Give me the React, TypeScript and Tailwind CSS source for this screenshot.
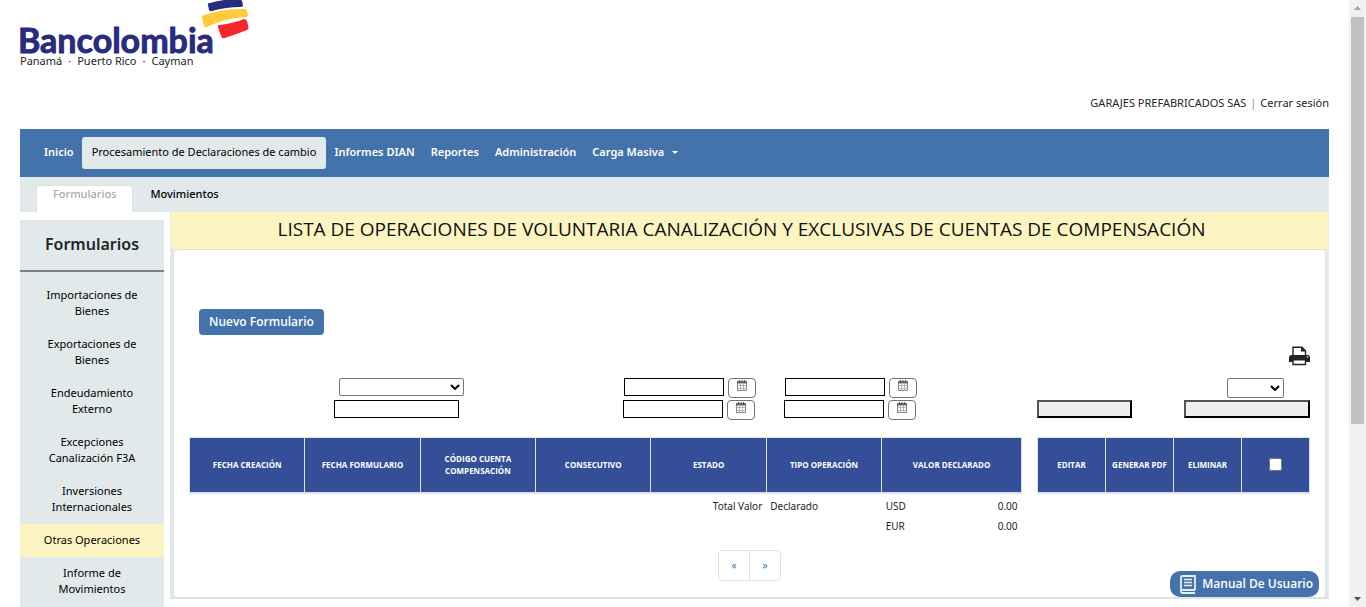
import type { ReactNode } from 'react';

const menu = ['Informes DIAN', 'Reportes', 'Administración'];

const forms = [
  'Importaciones de Bienes',
  'Exportaciones de Bienes',
  'Endeudamiento Externo',
  'Excepciones Canalización F3A',
  'Inversiones Internacionales',
  'Otras Operaciones',
  'Informe de Movimientos',
];

const columns = [
  'FECHA CREACIÓN',
  'FECHA FORMULARIO',
  'CÓDIGO CUENTA COMPENSACIÓN',
  'CONSECUTIVO',
  'ESTADO',
  'TIPO OPERACIÓN',
  'VALOR DECLARADO',
];

function Logo() {
  return (
    <svg width="232" height="56" viewBox="0 0 232 56" role="img" aria-label="Bancolombia" className="block overflow-visible">
      <text x="-2" y="53" fill="#292b7c" stroke="#292b7c" strokeWidth="0.9" className="font-['Lato',sans-serif] text-[34px] font-bold">
        Bancolombia
      </text>
      <path d="M188 5Q187 3 190 3Q204 -1 219 -1Q221 -1 222 1L223 5Q223 7 220 7Q206 7 192 11Q190 12 189 10Z" fill="#292b7c" />
      <path d="M182 18Q181 16 184 15Q204 8 225 9Q227 9 227 11L228 15Q228 17 226 17Q205 18 187 27Q185 28 184 26Z" fill="#ffcb3a" />
      <path d="M198 27Q197 25 200 25Q214 23 224 19Q226 19 227 21L228.500 27Q229 29 227 30Q217 34 205 38Q202 39 201 36Z" fill="#f5272c" />
    </svg>
  );
}

function CalendarIcon() {
  return (
    <svg width="12" height="13" viewBox="0 0 12 13" aria-hidden="true">
      <path d="M1.500 3.500h9v8h-9z" fill="#fff" stroke="#7d8287" />
      <path d="M1 2h10v2.500H1z" fill="#686d72" />
      <path d="M4.500 4v8M7.500 4v8M1 6.500h10M1 9.500h10" stroke="#a3a7ab" strokeWidth="0.8" />
      <path d="M3.500 1v3M6 1v3M8.500 1v3" stroke="#55595d" />
    </svg>
  );
}

function DateField({ label }: { label: string }) {
  return (
    <div className="flex items-start gap-1">
      <input aria-label={label} className="h-[18px] w-[100px] border border-black bg-white px-1" />
      <button type="button" aria-label={`Calendario: ${label}`} className="flex h-5 w-7 items-start justify-center rounded-[4px] border border-[#6c757d]">
        <CalendarIcon />
      </button>
    </div>
  );
}

function Select({ label, className }: { label: string; className: string }) {
  return (
    <div className={`relative ${className}`}>
      <select aria-label={label} className="block h-full w-full appearance-none rounded-[2px] border border-[#767676] bg-white px-1">
        <option></option>
      </select>
      <svg width="10" height="6" viewBox="0 0 10 6" className="pointer-events-none absolute inset-y-0 right-1 my-auto" aria-hidden="true">
        <path d="M1 1l4 4 4-4" fill="none" stroke="#000" strokeWidth="2" />
      </svg>
    </div>
  );
}

function Th({ children }: { children: ReactNode }) {
  return (
    <th className="h-[55px] border border-b-2 border-[#dee2e6] bg-[#344e98] px-0 text-center align-middle font-['Open_Sans',sans-serif] text-[8px] leading-3 font-bold text-white">
      {children}
    </th>
  );
}

function ScrollBar() {
  return (
    <div className="flex w-[17px] shrink-0 flex-col items-center bg-[#f1f1f1]" aria-hidden="true">
      <svg width="17" height="17" viewBox="0 0 17 17">
        <path d="M5 10l3.500-4 3.500 4z" fill="#a3a3a3" />
      </svg>
      <div className="flex w-[13px] flex-1 flex-col">
        <div className="basis-[71%] bg-[#c1c1c1]" />
      </div>
      <svg width="17" height="17" viewBox="0 0 17 17">
        <path d="M5 7l3.500 4 3.500-4z" fill="#505050" />
      </svg>
    </div>
  );
}

export default function App() {
  return (
    <div className="flex h-screen overflow-hidden bg-white font-['Noto_Sans','Open_Sans',sans-serif] text-[11px] leading-4 text-[#212529]">
      <div className="relative min-w-0 flex-1 overflow-hidden px-5">
        <header>
          <Logo />
          <p className="-mt-[3px] flex gap-1.5">
            <span>Panamá</span>
            <span>·</span>
            <span>Puerto Rico</span>
            <span>·</span>
            <span>Cayman</span>
          </p>
          <div className="flex justify-end gap-1 pt-[26px] pb-[18px]">
            <span>GARAJES PREFABRICADOS SAS</span>
            <span className="text-[#8a8fb5]">|</span>
            <a href="#salir">Cerrar sesión</a>
          </div>
        </header>

        <nav className="flex h-12 items-center bg-[#4472aa] px-4 font-semibold text-white">
          <a href="#inicio" className="px-2 pb-0.5">Inicio</a>
          <a href="#proceso" className="rounded-[3px] bg-[#e1e9ea] px-2.5 pt-[7px] pb-[9px] font-normal text-black">
            Procesamiento de Declaraciones de cambio
          </a>
          {menu.map((item) => (
            <a key={item} href="#menu" className="px-2 pb-0.5">{item}</a>
          ))}
          <button type="button" className="flex items-center gap-2 px-2 pb-0.5">
            Carga Masiva
            <svg width="6" height="3" viewBox="0 0 6 3" aria-hidden="true">
              <path d="M0 0h6L3 3z" fill="#fff" />
            </svg>
          </button>
        </nav>

        <nav className="flex h-[35px] items-end bg-[#e1e9ea] px-4">
          <a href="#formularios" className="h-[27px] rounded-t-[4px] border border-b-0 border-[#dee2e6] bg-white px-4 font-medium text-[#a9a9a9]">
            Formularios
          </a>
          <a href="#movimientos" className="h-[27px] px-[17px] pt-px font-medium text-black">Movimientos</a>
        </nav>

        <div className="flex items-start gap-1.5">
          <aside className="mt-2 w-36 shrink-0 bg-[#e1e9ea] pb-4 text-center text-black">
            <h2 className="border-b-2 border-[#808080] pt-3 pb-3.5 text-base leading-6 font-semibold text-[#212529]">Formularios</h2>
            <ul className="pt-[7px]">
              {forms.map((item) => (
                <li key={item} className={item === 'Otras Operaciones' ? 'bg-[#fcf5c2]' : ''}>
                  <a href="#form" className="block px-5 pt-2 pb-[9px]">{item}</a>
                </li>
              ))}
            </ul>
          </aside>

          <main className="min-w-0 flex-1 border-b border-[#dee2e6] bg-[#e1e9ea]">
            <h1 className="mx-px bg-[#fcf5c2] pr-4 pb-0.5 text-center font-['Open_Sans',sans-serif] text-[19px] leading-[35px] text-[#111]">
              LISTA DE OPERACIONES DE VOLUNTARIA CANALIZACIÓN Y EXCLUSIVAS DE CUENTAS DE COMPENSACIÓN
            </h1>
            <section className="mx-[3px] rounded-[4px] border border-[#dee2e6] bg-white px-[15px] pt-[59px] pb-4">
              <button type="button" className="ml-2.5 h-[26px] rounded-[4px] bg-[#4472aa] px-2.5 font-['Open_Sans',sans-serif] text-xs font-semibold text-white">
                Nuevo Formulario
              </button>
              <div className="flex justify-end pt-[11px]">
                <button type="button" aria-label="Imprimir">
                  <svg width="21" height="20" viewBox="0 0 21 20" aria-hidden="true">
                    <path d="M4 11V1.200h9l3.500 3.500V11" fill="#fff" stroke="#212529" strokeWidth="1.400" />
                    <path d="M12 1v4.500h5z" fill="#212529" />
                    <path d="M0 11.500Q0 9 2.500 9h16q2.500 0 2.500 2.500V16H0z" fill="#212529" />
                    <path d="M4 13.700h12.500v4.800H4z" fill="#fff" stroke="#212529" strokeWidth="1.400" />
                    <circle cx="18.500" cy="11" r="0.800" fill="#fff" />
                  </svg>
                </button>
              </div>

              <div className="flex gap-[15px] pt-3">
                <div className="flex flex-[833] flex-col gap-0.5">
                  <div className="grid grid-cols-[150fr_285fr_161fr_237fr]">
                    <Select label="Filtro" className="col-start-2 h-[18px] w-[125px]" />
                    <DateField label="Fecha de creación desde" />
                    <DateField label="Fecha de formulario desde" />
                  </div>
                  <div className="grid grid-cols-[145fr_289fr_161fr_238fr]">
                    <input aria-label="Valor del filtro" className="col-start-2 h-[18px] w-[125px] border border-black px-1" />
                    <DateField label="Fecha de creación hasta" />
                    <DateField label="Fecha de formulario hasta" />
                  </div>
                </div>
                <div className="flex flex-[273] flex-col gap-0.5">
                  <div className="flex justify-end pr-[26px]">
                    <Select label="Cantidad" className="h-5 w-[57px]" />
                  </div>
                  <div className="flex justify-between">
                    <input aria-label="Editar" disabled className="h-[18px] w-[95px] border-2 border-t-[#545454] border-r-black border-b-black border-l-[#545454] bg-[#efefef]" />
                    <input aria-label="Eliminar" disabled className="h-[18px] w-[126px] border-2 border-t-[#545454] border-r-black border-b-black border-l-[#545454] bg-[#efefef]" />
                  </div>
                </div>
              </div>

              <div className="flex items-start gap-[15px] pt-[17px]">
                <div className="min-w-0 flex-[833]">
                  <table className="w-full table-fixed border-collapse">
                    <colgroup>
                      {columns.map((c) => (
                        <col key={c} className={c === 'VALOR DECLARADO' ? 'w-[16.8%]' : ''} />
                      ))}
                    </colgroup>
                    <thead>
                      <tr>
                        {columns.map((c) => (
                          <Th key={c}>
                            <span className="block px-3.5">{c}</span>
                          </Th>
                        ))}
                      </tr>
                    </thead>
                    <tbody className="text-[10px]">
                      <tr className="h-5">
                        <td colSpan={5} className="pt-1 pr-1 text-right">Total Valor</td>
                        <td className="pt-1 pl-1">Declarado</td>
                        <td className="px-1 pt-1">
                          <div className="flex justify-between"><span>USD</span><span>0.00</span></div>
                        </td>
                      </tr>
                      <tr className="h-5">
                        <td colSpan={6}></td>
                        <td className="px-1 pt-1">
                          <div className="flex justify-between"><span>EUR</span><span>0.00</span></div>
                        </td>
                      </tr>
                    </tbody>
                  </table>
                </div>
                <div className="min-w-0 flex-[273]">
                  <table className="w-full table-fixed border-collapse">
                    <thead>
                      <tr>
                        <Th>EDITAR</Th>
                        <Th>GENERAR PDF</Th>
                        <Th>ELIMINAR</Th>
                        <Th>
                          <input type="checkbox" aria-label="Seleccionar todos" className="mx-auto block size-[13px]" />
                        </Th>
                      </tr>
                    </thead>
                  </table>
                </div>
              </div>

              <div className="flex justify-center pt-4">
                <div className="flex divide-x divide-[#dee2e6] rounded-[4px] border border-[#dee2e6] text-[10px] text-[#337ab7]">
                  <button type="button" aria-label="Anterior" className="h-[29px] w-[31px]">«</button>
                  <button type="button" aria-label="Siguiente" className="h-[29px] w-[30px]">»</button>
                </div>
              </div>
            </section>
          </main>
        </div>

        <button type="button" className="fixed right-[47px] bottom-2.5 flex h-[26px] items-center gap-1.5 rounded-[10px] bg-[#4472aa] pr-1.5 pl-2.5 font-['Open_Sans',sans-serif] text-xs font-semibold text-white">
          <svg width="16" height="19" viewBox="0 0 16 19" fill="none" stroke="#e8eef5" aria-hidden="true">
            <path d="M15 15H2.500Q1 15 1 16.500T2.500 18H15M1 16.500V2.500Q1 1 2.500 1H15v14" strokeWidth="1.800" />
            <path d="M4 4.500h8M4 7.500h8M4 10.500h8" strokeWidth="1.400" />
          </svg>
          Manual De Usuario
        </button>
      </div>
      <ScrollBar />
    </div>
  );
}
